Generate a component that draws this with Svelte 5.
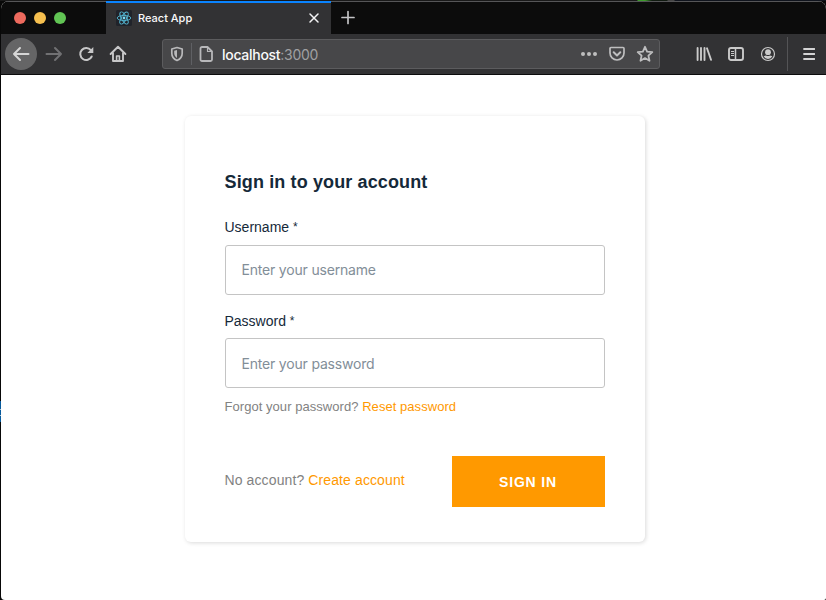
<script>
  let username = $state('');
  let password = $state('');
</script>

<div class="desktop">
  <div class="window">
    <div class="tabs">
      <div class="lights">
        <i style:background="#ed6a5e"></i>
        <i style:background="#f5bf4f"></i>
        <i style:background="#61c454"></i>
      </div>
      <div class="tab">
        <svg class="react" width="16" height="16" viewBox="0 0 16 16">
          <rect width="16" height="16" rx="1.5" fill="#20232a" />
          <g fill="none" stroke="#53b5d0" stroke-width=".9">
            <ellipse cx="8" cy="8" rx="6.8" ry="2.6" />
            <ellipse cx="8" cy="8" rx="6.8" ry="2.6" transform="rotate(60 8 8)" />
            <ellipse cx="8" cy="8" rx="6.8" ry="2.6" transform="rotate(120 8 8)" />
          </g>
          <circle cx="8" cy="8" r="1.4" fill="#7cdcf5" />
        </svg>
        <span class="title">React App</span>
        <svg class="close" width="12" height="12" viewBox="0 0 12 12" fill="none" stroke="#f4f4f5" stroke-width="1.5" stroke-linecap="round">
          <path d="M2 2l8 8M10 2l-8 8" />
        </svg>
      </div>
      <svg class="plus" width="16" height="16" viewBox="0 0 16 16" stroke="#c4c4c6" stroke-width="1.7" stroke-linecap="round">
        <path d="M8 1.5v12M2 7.5h12" />
      </svg>
    </div>

    <div class="toolbar">
      <div class="back">
        <svg width="18" height="16" viewBox="0 0 18 16" class="line" style:stroke="#d6d6d6">
          <path d="M16.5 8H2M8 2L2 8l6 6" />
        </svg>
      </div>
      <svg class="forward line" width="18" height="16" viewBox="0 0 18 16">
        <path d="M1.5 8H16M10 2l6 6-6 6" />
      </svg>
      <svg class="reload line" width="16" height="16" viewBox="0 0 16 16">
        <path d="M12.9 4.2A6 6 0 1 0 13.7 10.5" />
        <path d="M15.3 1v6H9.4z" fill="#c7c7c8" stroke="none" />
      </svg>
      <svg class="home" width="18" height="18" viewBox="0 0 18 18" fill="none" stroke="#c7c7c8" stroke-width="1.9" stroke-linejoin="round" stroke-linecap="round">
        <path d="M1.6 9L9 1.8 16.4 9M4 8v8h10V8" />
        <path d="M7.6 16v-5h2.8v5" stroke-width="1.6" />
      </svg>

      <div class="url">
        <svg class="shield" width="14" height="16" viewBox="0 0 14 16">
          <path d="M7 1.5L12.2 3v4.2c0 3.2-1.8 5.8-5.2 7.3-3.4-1.5-5.2-4.1-5.2-7.3V3z" fill="none" stroke="#b8b8ba" stroke-width="1.7" stroke-linejoin="round" />
          <path d="M7 4v8c-1.9-1.2-2.8-2.8-2.8-5V4.7z" fill="#b8b8ba" />
        </svg>
        <span class="rule"></span>
        <svg class="page" width="14" height="16" viewBox="0 0 14 16" fill="none" stroke="#b8b8ba" stroke-width="1.8" stroke-linejoin="round">
          <path d="M3 1h5.5L13 5.5V13.5a1.5 1.5 0 0 1-1.5 1.5H3A1.5 1.5 0 0 1 1.5 13.5v-11A1.5 1.5 0 0 1 3 1z" />
          <path d="M8.5 1.5v4H12.5" stroke-width="1.2" />
        </svg>
        <span class="address">localhost<span>:3000</span></span>
        <svg class="dots" width="16" height="4" viewBox="0 0 16 4" fill="#bebebf">
          <circle cx="2" cy="2" r="2" /><circle cx="8" cy="2" r="2" /><circle cx="14" cy="2" r="2" />
        </svg>
        <svg class="pocket line" width="16" height="16" viewBox="0 0 16 16">
          <path d="M2 1.5h12q1 0 1 1V7a7 7 0 0 1-14 0V2.5q0-1 1-1z" stroke-width="1.7" />
          <path d="M4.7 6.3L8 9.4l3.3-3.1" />
        </svg>
        <svg class="star line" width="18" height="18" viewBox="0 0 18 18">
          <path d="M9 1.8l2.1 4.8 5.2.5-3.9 3.5 1.1 5.2L9 13.1l-4.5 2.7 1.1-5.2-3.9-3.5 5.2-.5z" stroke-width="1.8" />
        </svg>
      </div>

      <svg class="library" width="16" height="16" viewBox="0 0 16 16" stroke="#cacaca" stroke-width="1.9" stroke-linecap="round">
        <path d="M1.6 2v12M5 2v12M8.500 2v12M11 2.300l4 11.500" />
      </svg>
      <svg class="sidebar" width="16" height="16" viewBox="0 0 16 16" fill="none" stroke="#cacaca">
        <rect x="1" y="2" width="14" height="12" rx="2" stroke-width="1.9" />
        <path d="M7.5 2v12" stroke-width="1.5" />
        <path d="M3 5.5h3M3 7.5h3M3 9.5h3" />
      </svg>
      <svg class="account" width="16" height="16" viewBox="0 0 16 16">
        <circle cx="8" cy="8" r="6.5" fill="none" stroke="#cacaca" stroke-width="1.2" />
        <circle cx="8" cy="6.2" r="2.9" fill="#cacaca" />
        <path d="M3.6 10.3q1.6-.8 2.4-.8 2 1.2 4 0 .8 0 2.4.8a5 5 0 0 1-8.8 0z" fill="#cacaca" />
      </svg>
      <span class="split"></span>
      <svg class="menu" width="12" height="14" viewBox="0 0 12 14" stroke="#d4d4d5" stroke-width="1.8" stroke-linecap="round">
        <path d="M1 2h10.5M1 7h10.5M1 12h10.5" />
      </svg>
    </div>

    <main>
      <form class="card" onsubmit={(e) => e.preventDefault()}>
        <h1>Sign in to your account</h1>
        <label for="username">Username <sup>*</sup></label>
        <input id="username" placeholder="Enter your username" bind:value={username} />
        <label class="second" for="password">Password <sup>*</sup></label>
        <input id="password" type="password" placeholder="Enter your password" bind:value={password} />
        <div class="hint">Forgot your password? <a href="#reset">Reset password</a></div>
        <div class="footer">
          <span class="join">No account? <a href="#create">Create account</a></span>
          <button>SIGN IN</button>
        </div>
      </form>
    </main>
  </div>
</div>

<style>
  .desktop {
    width: 826px;
    height: 600px;
    box-sizing: border-box;
    padding: 1px 0 0 1px;
    overflow: hidden;
    background:
      linear-gradient(#075a9c 0 8px, #b0c4d8 8px 9px, #075a9c 9px 14px, #b0c4d8 14px 15px, #075a9c 15px) 0 401px / 1px 21px no-repeat,
      linear-gradient(90deg, #191919 0 637px, #3c9a2b 638px 645px, #101a10 652px 667px, #444 668px 674px, #10141d 675px) 0 0 / 826px 1px no-repeat,
      #080808;
    font-family: "Liberation Sans", Arial, sans-serif;
  }
  .window {
    height: 599px;
    box-sizing: border-box;
    border-radius: 8px 8px 2px 4px;
    overflow: hidden;
    background: #fff;
    display: flex;
    flex-direction: column;
  }
  svg { display: block; flex: none; }
  .line { fill: none; stroke: #bebebf; stroke-width: 2; stroke-linecap: round; stroke-linejoin: round; }
  .tabs {
    height: 33px;
    box-sizing: border-box;
    background: #0c0c0c;
    border-top: 1px solid #565658;
    display: flex;
    align-items: center;
    flex: none;
  }
  .lights { display: flex; gap: 8px; padding-left: 13px; width: 92px; }
  .lights i { width: 12px; height: 12px; border-radius: 50%; }
  .tab {
    width: 225px;
    height: 33px;
    margin-top: -1px;
    box-sizing: border-box;
    border-top: 2px solid #0a84ff;
    background: #323234;
    display: flex;
    align-items: center;
    flex: none;
    padding: 0 11px 2px 10px;
  }
  .title {
    margin-left: 6px;
    font: 500 11px/14px Inter, sans-serif;
    color: #f9f9fa;
    flex: 1;
  }
  .plus { margin-left: 9px; }
  .toolbar {
    height: 41px;
    box-sizing: border-box;
    border-bottom: 1px solid #0c0c0d;
    background: #323234;
    display: flex;
    align-items: center;
    flex: none;
    padding-left: 4px;
  }
  .back {
    width: 32px;
    height: 32px;
    box-sizing: border-box;
    border-radius: 50%;
    background: #656566;
    display: flex;
    align-items: center;
    justify-content: center;
    flex: none;
  }
  .forward { margin-left: 8px; stroke: #717173; }
  .reload { margin-left: 15px; stroke: #c7c7c8; }
  .home { margin-left: 15px; }
  .url {
    width: 498px;
    height: 30px;
    box-sizing: border-box;
    margin-left: 35px;
    border: 1px solid #5c5c5e;
    border-radius: 3px;
    background: #474749;
    display: flex;
    align-items: center;
    flex: none;
    padding: 0 5px 0 7px;
  }
  .rule { width: 1px; height: 22px; margin: 0 7px; background: #5f6064; }
  .address { margin-left: 9px; font: 500 14px/18px Inter, sans-serif; letter-spacing: -.28px; color: #f9f9fa; flex: 1; padding-top: 2px; }
  .address span { color: #a0a0a2; font-weight: 400; }
  .pocket { margin-left: 12px; }
  .star { margin-left: 11px; }
  .library { margin-left: 36px; }
  .sidebar { margin-left: 16px; }
  .account { margin-left: 16px; }
  .split { width: 1px; height: 34px; margin: 0 15px 0 11px; background: #545456; }
  main { flex: 1; padding: 41px 0 0 3px; display: flex; justify-content: center; align-items: flex-start; }
  .card {
    width: 460px;
    height: 426px;
    box-sizing: border-box;
    padding: 54px 40px 35px;
    border-radius: 6px;
    background: #fff;
    box-shadow: 1px 1px 4px 0 rgba(0, 0, 0, .15);
    display: flex;
    flex-direction: column;
  }
  .card > * { flex-shrink: 0; }
  h1 { margin: 0 0 24px -.5px; font-size: 18px; line-height: 24px; letter-spacing: .13px; color: #152939; }
  label { margin-left: -.5px; font-size: 14px; line-height: 18px; color: #152939; }
  sup { font-size: 12px; line-height: 0; vertical-align: 1px; }
  input {
    width: 380px;
    height: 50px;
    box-sizing: border-box;
    margin: 9px 0 0;
    padding: 0 16px 2px 15.5px;
    border: 1px solid #c4c4c4;
    border-radius: 3px;
    background: #fff;
    font: 14px Inter, sans-serif;
    letter-spacing: -.19px;
    outline: none;
  }
  input::placeholder { color: #828e98; opacity: 1; }
  .second { margin-top: 17px; }
  .second + input { margin-top: 8px; padding-bottom: 0; }
  .hint { margin: 10px 0 0 -.5px; font-size: 13px; line-height: 18px; letter-spacing: .05px; color: #828282; white-space: nowrap; }
  a { color: #ff9900; text-decoration: none; }
  .footer { margin-top: 40px; display: flex; justify-content: space-between; align-items: center; }
  .join { margin-left: -.5px; font-size: 14px; line-height: 18px; letter-spacing: .11px; color: #828282; white-space: nowrap; padding-bottom: 4px; }
  button {
    width: 153px;
    height: 51px;
    border: 0;
    padding: 0 1px 0 0;
    background: #ff9900;
    color: #fff;
    font: bold 14px "Liberation Sans", Arial, sans-serif;
    letter-spacing: .85px;
  }
</style>
